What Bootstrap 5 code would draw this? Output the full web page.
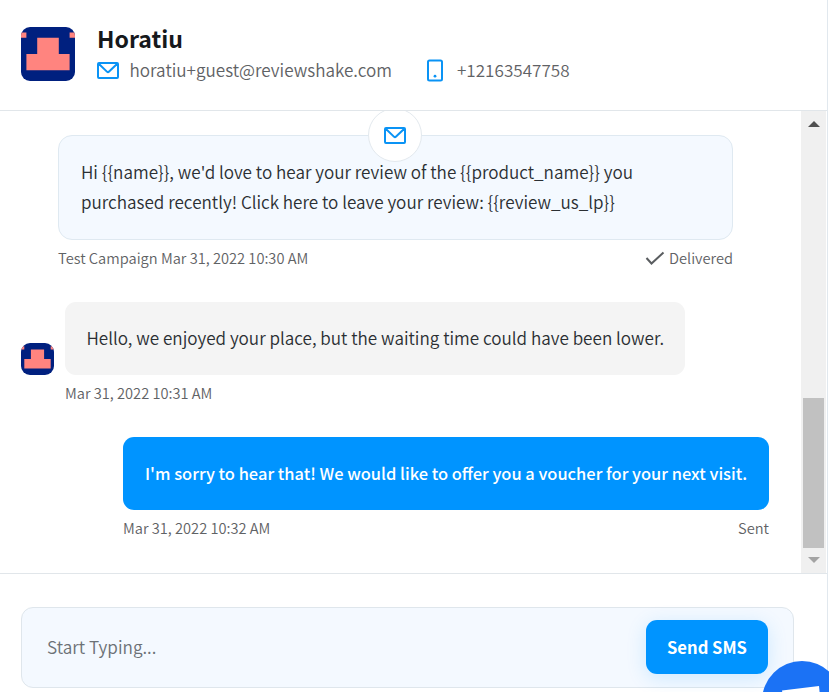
<!DOCTYPE html>
<html lang="en">
<head>
<meta charset="utf-8">
<meta name="viewport" content="width=device-width, initial-scale=1">
<title>Conversation with Horatiu</title>
<link href="https://cdn.jsdelivr.net/npm/bootstrap@5.3.0/dist/css/bootstrap.min.css" rel="stylesheet">
<style>
  body { font-family: "Noto Sans CJK SC", "Open Sans", sans-serif; font-weight: 350; color: #2b2f33; background: #fff; }
  .chat-app { width: 828px; height: 692px; border-right: 1px solid #e1e8ee; }
  .chat-head { height: 111px; padding: 23px 21px 0; border-bottom: 1px solid #e1e6ea; gap: 22px; }
  .avatar { width: 54px; height: 54px; border-radius: 9px; margin-top: 4px; }
  .avatar-mini { width: 33px; height: 32px; border-radius: 9px; margin-left: 21px; margin-right: 11px; margin-top: 41px; }
  .person { font-size: 23.1px; font-weight: 700; line-height: 30px; color: #16191c; }
  .contact { font-size: 17.1px; line-height: 30px; color: #5f6265; margin-top: 2px; }
  .contact-phone { margin-left: 34px; }
  .chat-body { height: 462px; }
  .thread { width: 801px; }
  .scroll-rail { width: 25px; background: #f0f0f0; }
  .scroll-thumb { width: 21px; height: 150px; background: #c1c1c1; margin-top: 271px; }
  .bubble { border-radius: 11px; font-size: 17.1px; line-height: 30px; padding: 21px 22px; }
  .bubble-campaign { width: 675px; height: 105px; margin: 24px 0 0 58px; background: #f4f9ff; border: 1px solid #dfe9f1; border-radius: 14px; padding: 21px 22px; }
  .bubble-in { width: 620px; height: 73px; background: #f4f4f4; padding-left: 21.5px; }
  .bubble-out { width: 646px; height: 73px; background: #0094ff; color: #fff; font-weight: 500; margin-left: 123px; font-size: 16.45px; }
  .channel { width: 54px; height: 54px; left: 309px; top: -28px; background: #fff; border: 1px solid #e3e9ee; }
  .meta { font-size: 14.65px; line-height: 20px; color: #5f6265; margin-top: 8px; }
  .composer-wrap { border-top: 1px solid #e1e6ea; padding: 33px 33px 0 21px; }
  .composer { height: 81px; background: #f4f9ff; border: 1px solid #dfe6ec; border-radius: 12px; padding: 0 25px 2px; }
  .composer input { font-size: 17.2px; font-weight: 350; color: #2b2f33; }
  .composer input::placeholder { color: #6c7176; opacity: 1; }
  .btn-send { width: 122px; height: 54px; border-radius: 11px; background: #0094ff; color: #fff; font-size: 16.6px; line-height: 26px; font-weight: 700; padding: 1px 0 0; box-shadow: 0 4px 20px rgba(0,148,255,.16); }
  .launcher { left: 762px; top: 661px; width: 67px; height: 31px; }
</style>
</head>
<body class="overflow-hidden">
<svg class="d-none" xmlns="http://www.w3.org/2000/svg">
  <symbol id="face" viewBox="0 0 10 10" preserveAspectRatio="none">
    <path fill="#00207f" d="M0 0h10v10H0z"/>
    <path fill="#ff847f" d="M0 1h1v1H0zM9 1h1v1H9zM3 2h4v3h2v3H1V5h2z"/>
  </symbol>
  <symbol id="mail" viewBox="0 0 22 17">
    <path fill="none" stroke="#0a93f5" stroke-width="2" stroke-linejoin="round" stroke-linecap="round" d="M2 1h18a1 1 0 0 1 1 1v13a1 1 0 0 1-1 1H2a1 1 0 0 1-1-1V2a1 1 0 0 1 1-1zM2 2l7.900 7.600a1.600 1.600 0 0 0 2.200 0L20 2"/>
  </symbol>
</svg>
<div class="chat-app d-flex flex-column">
  <header class="chat-head d-flex flex-shrink-0">
    <svg class="avatar flex-shrink-0"><use href="#face"/></svg>
    <div>
      <h1 class="person mb-0">Horatiu</h1>
      <div class="contact d-flex align-items-center">
        <svg width="22" height="17" class="flex-shrink-0"><use href="#mail"/></svg>
        <span style="margin-left:10.500px">horatiu+guest@reviewshake.com</span>
        <svg class="contact-phone flex-shrink-0" width="18" height="23" viewBox="0 0 18 23"><rect x="2" y="1.500" width="14" height="20" rx="1.500" fill="none" stroke="#0a93f5" stroke-width="2"/><circle cx="9" cy="17.200" r="1.400" fill="#0a93f5"/></svg>
        <span style="margin-left:13px">+12163547758</span>
      </div>
    </div>
  </header>

  <main class="chat-body d-flex flex-shrink-0 overflow-hidden">
    <div class="thread">
      <div class="bubble bubble-campaign position-relative">
        <span class="channel position-absolute rounded-circle d-flex align-items-center justify-content-center"><svg width="22" height="17"><use href="#mail"/></svg></span>
        <div class="text-nowrap">Hi {{name}}, we'd love to hear your review of the {{product_name}} you<br>purchased recently! Click here to leave your review: {{review_us_lp}}</div>
      </div>
      <div class="meta d-flex justify-content-between" style="margin-left:58px;width:675px">
        <span>Test Campaign Mar 31, 2022 10:30 AM</span>
        <span class="d-flex align-items-center"><svg width="20" height="14" viewBox="0 0 20 14" class="me-1"><path d="M1.500 7l5 5.500L18.500 1.500" fill="none" stroke="#5a5d60" stroke-width="2"/></svg>Delivered</span>
      </div>

      <div class="d-flex align-items-start" style="margin-top:34px">
        <svg class="avatar-mini flex-shrink-0"><use href="#face"/></svg>
        <div>
          <div class="bubble bubble-in text-nowrap">Hello, we enjoyed your place, but the waiting time could have been lower.</div>
          <div class="meta">Mar 31, 2022 10:31 AM</div>
        </div>
      </div>

      <div style="margin-top:34px">
        <div class="bubble bubble-out text-nowrap">I'm sorry to hear that! We would like to offer you a voucher for your next visit.</div>
        <div class="meta d-flex justify-content-between" style="margin-left:123px;width:646px"><span>Mar 31, 2022 10:32 AM</span><span>Sent</span></div>
      </div>
    </div>
    <div class="scroll-rail d-flex flex-column align-items-center">
      <svg width="12" height="6" viewBox="0 0 12 6" class="flex-shrink-0" style="margin-top:10px"><path d="M0 6L6 0l6 6z" fill="#505050"/></svg>
      <div class="scroll-thumb flex-shrink-0"></div>
      <svg width="12" height="6" viewBox="0 0 12 6" class="flex-shrink-0" style="margin-top:9px"><path d="M0 0l6 6 6-6z" fill="#a3a3a3"/></svg>
    </div>
  </main>

  <footer class="composer-wrap flex-grow-1">
    <div class="composer d-flex align-items-center">
      <input id="message" class="form-control border-0 bg-transparent p-0 shadow-none" type="text" placeholder="Start Typing..." aria-label="Message">
      <button class="btn btn-send border-0 flex-shrink-0" type="button">Send SMS</button>
    </div>
  </footer>
</div>
<svg class="launcher position-absolute" viewBox="0 0 67 31"><circle cx="40" cy="40" r="40" fill="#1b72f5"/><path d="M20 29.500l37-4.500 3 30H24z" fill="#fff"/></svg>
<script src="https://cdn.jsdelivr.net/npm/bootstrap@5.3.0/dist/js/bootstrap.bundle.min.js"></script>
</body>
</html>
